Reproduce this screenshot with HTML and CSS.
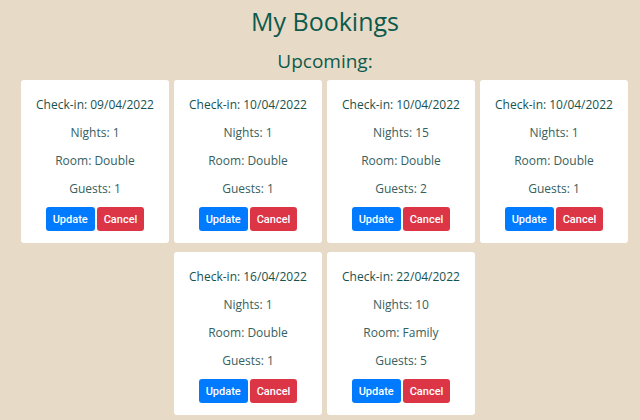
FILE: index.html
```html
<!DOCTYPE html>
<html>
<head>
<meta charset="utf-8">
<link rel="stylesheet" href="styles.css">
</head>
<body>
<h1 class="title">My Bookings</h1>
<h2 class="subtitle">Upcoming:</h2>
<div class="grid">
  <div class="card">
    <p class="checkin">Check-in: 09/04/2022</p>
    <p>Nights: 1</p>
    <p>Room: Double</p>
    <p>Guests: 1</p>
    <div class="actions"><button class="btn update">Update</button><button class="btn cancel">Cancel</button></div>
  </div>
  <div class="card">
    <p class="checkin">Check-in: 10/04/2022</p>
    <p>Nights: 1</p>
    <p>Room: Double</p>
    <p>Guests: 1</p>
    <div class="actions"><button class="btn update">Update</button><button class="btn cancel">Cancel</button></div>
  </div>
  <div class="card">
    <p class="checkin">Check-in: 10/04/2022</p>
    <p>Nights: 15</p>
    <p>Room: Double</p>
    <p>Guests: 2</p>
    <div class="actions"><button class="btn update">Update</button><button class="btn cancel">Cancel</button></div>
  </div>
  <div class="card">
    <p class="checkin">Check-in: 10/04/2022</p>
    <p>Nights: 1</p>
    <p>Room: Double</p>
    <p>Guests: 1</p>
    <div class="actions"><button class="btn update">Update</button><button class="btn cancel">Cancel</button></div>
  </div>
  <div class="card">
    <p class="checkin">Check-in: 16/04/2022</p>
    <p>Nights: 1</p>
    <p>Room: Double</p>
    <p>Guests: 1</p>
    <div class="actions"><button class="btn update">Update</button><button class="btn cancel">Cancel</button></div>
  </div>
  <div class="card">
    <p class="checkin">Check-in: 22/04/2022</p>
    <p>Nights: 10</p>
    <p>Room: Family</p>
    <p>Guests: 5</p>
    <div class="actions"><button class="btn update">Update</button><button class="btn cancel">Cancel</button></div>
  </div>
</div>
</body>
</html>
```
FILE: styles.css
```css
html, body {
  margin: 0;
  padding: 0;
  background: #e7dac7;
  font-family: "Open Sans", "Liberation Sans", sans-serif;
}
.title {
  margin: 6px 0 0;
  text-align: center;
  font-size: 25px;
  font-weight: 400;
  line-height: 30px;
  color: #0d5a4d;
  padding-left: 10px;
}
.subtitle {
  margin: 13px 0 0;
  text-align: center;
  font-size: 19px;
  font-weight: 400;
  line-height: 24px;
  color: #0d5a4d;
  padding-left: 10px;
}
.grid {
  width: 607px;
  margin: 7px 0 0 21px;
  display: flex;
  flex-wrap: wrap;
  justify-content: center;
  gap: 9px 5px;
}
.card {
  width: 148px;
  box-sizing: border-box;
  background: #fff;
  border-radius: 3px;
  padding: 15px 0 12px;
  text-align: center;
}
.card p {
  margin: 0 0 8px;
  font-size: 12px;
  line-height: 20px;
  color: #356160;
}
.card p.checkin {
  color: #17524f;
  font-weight: 500;
}
.actions {
  display: flex;
  justify-content: center;
  gap: 2px;
}
.btn {
  height: 24px;
  border: none;
  border-radius: 3px;
  padding: 0 7px;
  color: #fff;
  font-family: Roboto, "Liberation Sans", sans-serif;
  font-size: 11px;
  font-weight: 500;
}
.update { background: #007bff; }
.cancel { background: #dc3545; }
```
